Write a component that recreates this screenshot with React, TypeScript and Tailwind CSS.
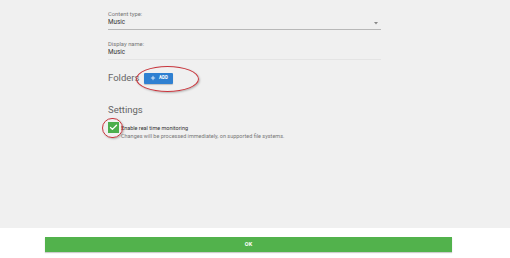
import { Plus, Check } from 'lucide-react';

export default function App() {
  return (
    <div className="w-[510px] h-[258px] flex flex-col bg-[#f0f0f0] font-['Roboto',sans-serif] text-[#333] overflow-hidden">
      <div className="h-[228px] pl-[108px] pt-[10px]">
        <div className="w-[273px] flex flex-col">
          <label className="text-[5.8px] text-[#777] leading-[8px]">Content type:</label>
          <div className="flex items-center justify-between h-[12px] pb-[1px] border-b border-[#b8b8b8] text-[6.3px]">
            <span>Music</span>
            <svg width="4" height="3" viewBox="0 0 4 3" className="mr-[3px]">
              <path d="M0 0 L4 0 L2 2.5 Z" fill="#888" />
            </svg>
          </div>

          <label className="mt-[10px] text-[5.8px] text-[#777] leading-[8px]">Display name:</label>
          <div className="flex items-center h-[12px] pb-[1px] border-b border-[#e4e4e4] text-[6.3px]">
            <span>Music</span>
          </div>

          <div className="mt-[12px] h-[12px] flex items-center gap-[5px] relative">
            <span className="text-[9.5px] text-[#666]">Folders</span>
            <button className="h-[11px] w-[29px] flex items-center justify-center gap-[3px] bg-[#2f80d1] rounded-[1px] text-white text-[4.5px] font-bold shadow-[0_1px_1px_rgba(0,0,0,0.2)]">
              <Plus className="w-[6px] h-[6px]" strokeWidth={3} />
              ADD
            </button>
            <span className="absolute left-[28px] top-[-6px] w-[63px] h-[26px] rounded-[50%] border border-[#c8353c] shadow-[1px_1px_2px_rgba(0,0,0,0.25)]" />
          </div>

          <div className="mt-[20px] text-[9.5px] leading-[12px] text-[#666]">Settings</div>

          <div className="mt-[6px] flex items-start gap-[2px] relative">
            <div className="w-[11px] h-[11px] bg-[#4cae4c] flex items-center justify-center">
              <Check className="w-[9px] h-[9px] text-white" strokeWidth={3.5} />
            </div>
            <div className="flex flex-col">
              <span className="text-[5.5px] leading-[8px] mt-[2px] text-[#333]">Enable real time monitoring</span>
              <span className="text-[5.5px] leading-[8px] text-[#777]">Changes will be processed immediately, on supported file systems.</span>
            </div>
            <span className="absolute left-[-6px] top-[-4px] w-[21px] h-[20px] rounded-full border border-[#c8353c] shadow-[1px_1px_2px_rgba(0,0,0,0.25)]" />
          </div>
        </div>
      </div>
      <div className="flex-1 bg-white pl-[45px] pt-[9px]">
        <button className="w-[407px] h-[15px] bg-[#52b24c] text-white text-[5.5px] font-bold flex items-center justify-center shadow-[0_1px_1px_rgba(0,0,0,0.2)]">
          OK
        </button>
      </div>
    </div>
  );
}
